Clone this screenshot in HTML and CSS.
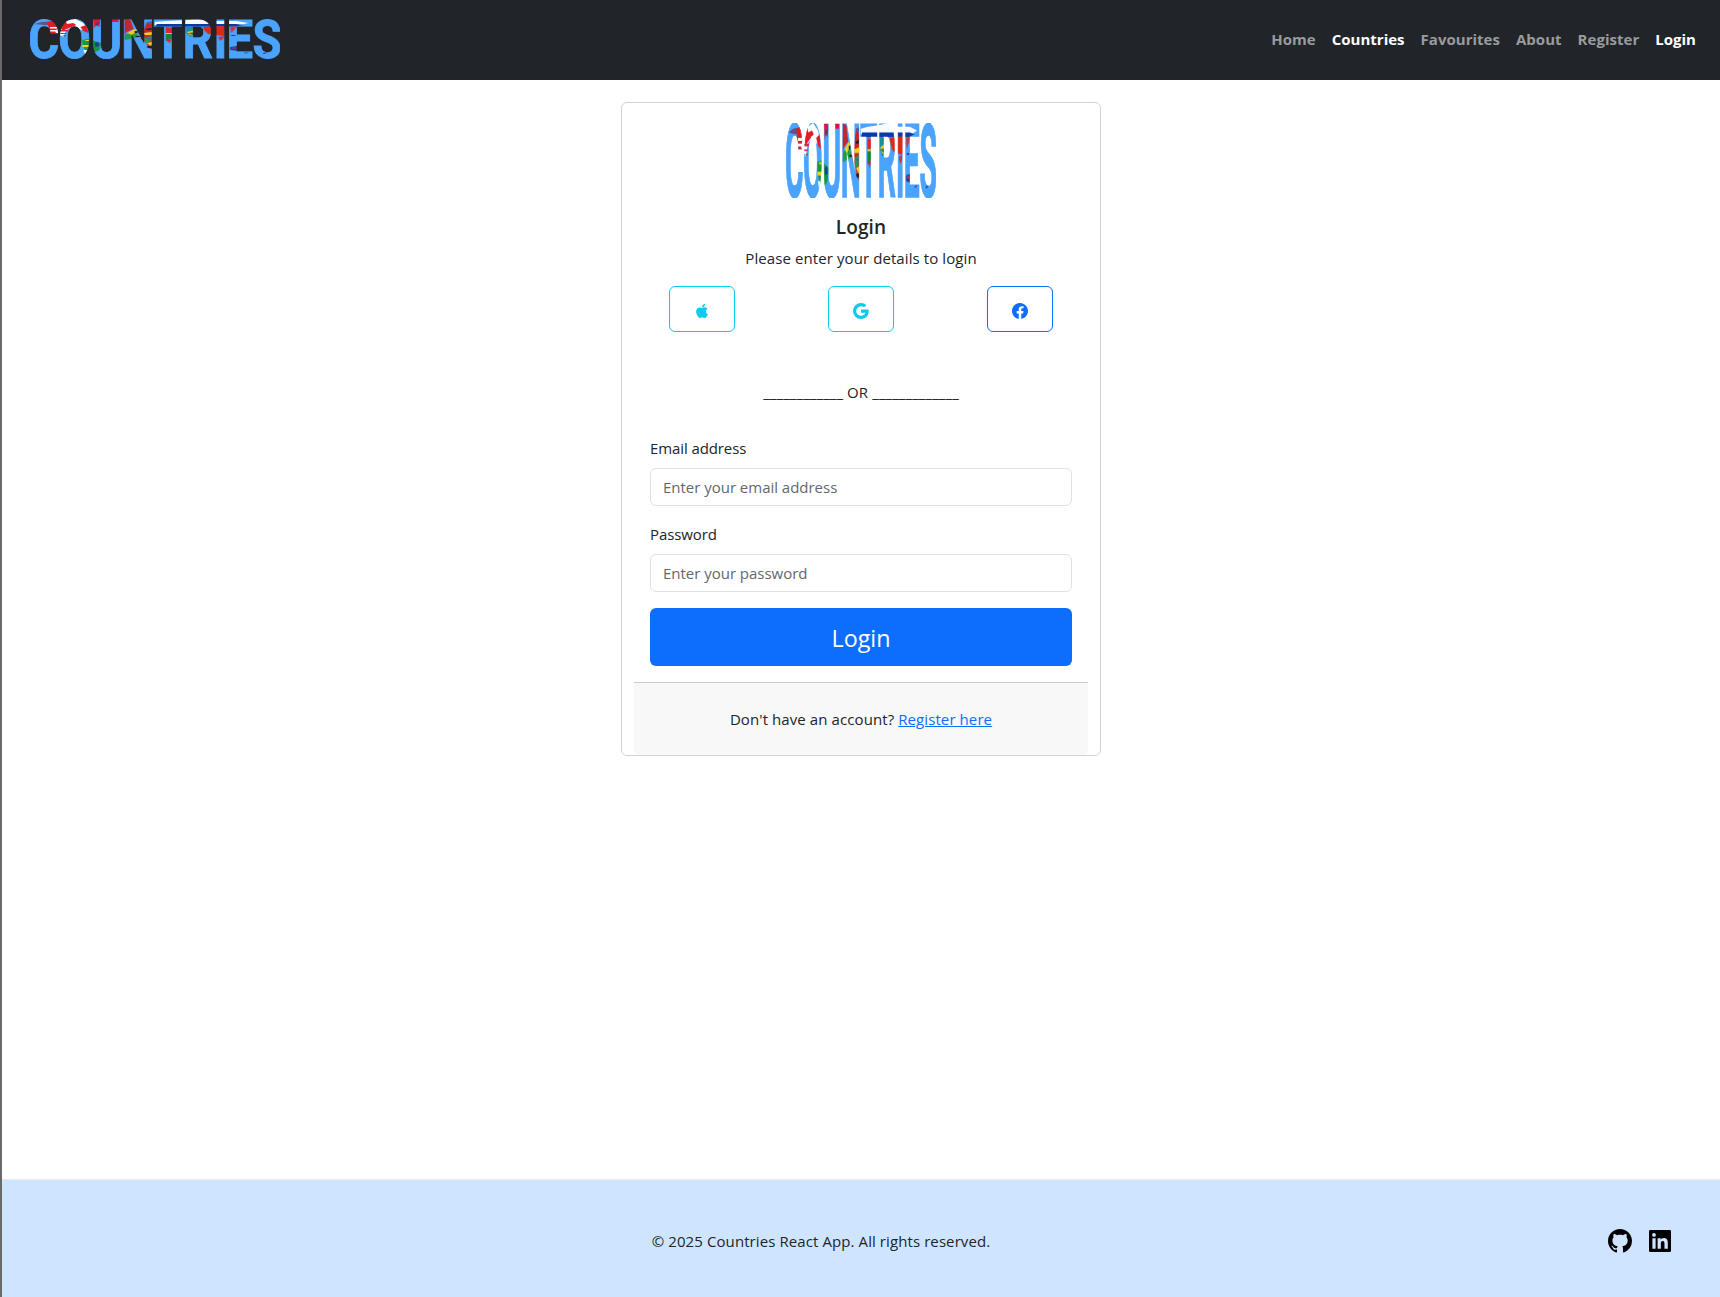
FILE: index.html
```html
<!DOCTYPE html>
<html lang="en">
<head>
<meta charset="utf-8">
<title>Countries</title>
<link rel="stylesheet" href="styles.css">
</head>
<body>
<svg class="defs" aria-hidden="true">
  <defs>
    <pattern id="map" width="260" height="44" patternUnits="userSpaceOnUse" patternTransform="scale(1.1494 1)">
      <rect width="260" height="44" fill="#4aa3ff"/>
      <path d="M4 5l8-2 14-1 1 4H14z" fill="#5b5488"/>
      <path d="M17 3l7-1 3 5v7h-7z" fill="#e01b2c"/>
      <path d="M20 8h7v1.500h-7zM20 11h7v1.500h-7z" fill="#fff"/>
      <path d="M25 13l6-10 14-3 8 4 4 6-6 1-7-4-8 4-3 7z" fill="#fff"/>
      <path d="M31 9l4-7 2 3 6-1 3 2-7 3-7 3zM50 8l6-2 2 8-5-2z" fill="#e51b24"/>
      <path d="M30 11h8v1.500h-8zM30 14h6v1h-6zM31 17l5-1v1.500z" fill="#d9253f"/>
      <path d="M52 21l6-1 13 4-2 7-8 4-5-2-4-7z" fill="#159a3b"/>
      <path d="M52 26h7v2h-7zM55 21h4v1h-4z" fill="#f4d417"/>
      <path d="M64 24l4-1 1 4-4 1z" fill="#173f9b"/>
      <path d="M53 31h4l-2 5z" fill="#fff"/>
      <path d="M63 0h7l-1 8-3-2-2 3zM81 0h7v3h-7z" fill="#dd153d"/>
      <path d="M65 5l4-2v1l-3 3z" fill="#254388"/>
      <path d="M94 0l6 1 3 9-7 3-2 3zM116 3h6v28l-4-2-3-6-5-3z" fill="#c3272d"/>
      <path d="M94 16l10-5 5 7-9 2-6 1zM113 19l8-2-1 6-5 1z" fill="#239b42"/>
      <path d="M97 14l7-4 3 2-6 4zM113 14l8-1v3h-7zM116 24l6-1-2 4z" fill="#f2cd22"/>
      <path d="M104 12h3v2h-3zM115 10l6-1v2h-5zM116 27h6v2h-5zM105 17h5v1h-5z" fill="#182425"/>
      <path d="M116 3l6-1v3h-5zM116 19h6v1h-6z" fill="#3d66a8"/>
      <path d="M124 3l12-1 20-1 11-1 14 2 6 0 18 0 12 2-8 2h-85z" fill="#f8fbff"/>
      <path d="M126 5h79l8 1-9 1.500h-79z" fill="#0b3aa5"/>
      <path d="M135 8l7 1-1 5h-6zM135 21l6-1-2 4z" fill="#dd2430"/>
      <path d="M135 15h6l1 4-7 3z" fill="#16843c"/>
      <path d="M135 14h7v1h-7z" fill="#f0ca25"/>
      <path d="M155 8h9l1 7-5 3-5-4z" fill="#168f9c"/>
      <path d="M156 13l8-2 4 3-4 3-5-1z" fill="#f1c531"/>
      <path d="M157 14l10-1-3 4z" fill="#16823d"/>
      <path d="M172 8l22-1-1 10-9-1-7-1-4-4z" fill="#dc2815"/>
      <path d="M187 18l6-1-1 3-3 2zM199 8l7-1-3 4-3 3z" fill="#c63543"/>
      <path d="M199 28l7-1 3 3-2 2-8-1z" fill="#243aa0"/>
      <path d="M200 29l4-1v2z" fill="#e12c43"/>
      <path d="M205 27l2-1v3h-2zM200 16h4v1h-4zM212 34l6-1-3 1.500zM231 34l6-1-4 2z" fill="#213983"/>
    </pattern>
    <symbol id="logo" viewBox="0 0 250 40" preserveAspectRatio="none">
      <text class="logo-text" transform="scale(.875 1)" y="39.200" x="-1.900 32.300 69.700 104.200 141 174.700 209.700 224.500 254.300">COUNTRIES</text>
    </symbol>
  </defs>
</svg>
<div class="page">
  <header class="navbar">
    <svg class="brand" role="img" aria-label="Countries"><use href="#logo" width="250" height="40"/></svg>
    <nav class="links">
      <a>Home</a><a class="on">Countries</a><a>Favourites</a><a>About</a><a>Register</a><a class="on">Login</a>
    </nav>
  </header>
  <main>
    <section class="card">
      <svg class="card-logo" role="img" aria-label="Countries"><use href="#logo" width="150" height="75"/></svg>
      <h1>Login</h1>
      <p class="intro">Please enter your details to login</p>
      <div class="social">
        <button class="info" aria-label="Apple"><svg width="14" height="16" viewBox="0 0 384 512"><path d="M318.700 268.700c-.2-36.700 16.400-64.400 50-84.800-18.800-26.900-47.200-41.700-84.700-44.600-35.500-2.800-74.300 20.700-88.500 20.700-15 0-49.400-19.700-76.400-19.700C63.300 141.200 4 184.800 4 273.500q0 39.300 14.400 81.200c12.800 36.700 59 126.700 107.200 125.200 25.200-.6 43-17.900 75.800-17.900 31.800 0 48.300 17.900 76.400 17.900 48.600-.7 90.400-82.500 102.600-119.300-65.200-30.700-61.700-90-61.700-91.900zm-56.600-164.200c27.300-32.400 24.800-61.900 24-72.500-24.100 1.400-52 16.400-67.900 34.900-17.500 19.800-27.800 44.300-25.600 71.900 26.100 2 49.900-11.400 69.500-34.300z"/></svg></button>
        <button class="info" aria-label="Google"><svg width="16" height="16" viewBox="0 0 16 16"><path d="M15.545 6.558a9.420 9.420 0 0 1 .139 1.626c0 2.434-.87 4.492-2.384 5.885h.002C11.978 15.292 10.158 16 8 16A8 8 0 1 1 8 0a7.689 7.689 0 0 1 5.352 2.082l-2.284 2.284A4.347 4.347 0 0 0 8 3.166c-2.087 0-3.860 1.408-4.492 3.304a4.792 4.792 0 0 0 0 3.063h.003c.635 1.893 2.405 3.301 4.492 3.301 1.078 0 2.004-.276 2.722-.764h-.003a3.702 3.702 0 0 0 1.599-2.431H8v-3.080h7.545z"/></svg></button>
        <button class="primary" aria-label="Facebook"><svg width="16" height="16" viewBox="0 0 16 16"><path d="M16 8.049c0-4.446-3.582-8.050-8-8.050C3.580 0-.002 3.603-.002 8.050c0 4.017 2.926 7.347 6.750 7.951v-5.625h-2.030V8.050H6.750V6.275c0-2.017 1.195-3.131 3.022-3.131.876 0 1.791.157 1.791.157v1.980h-1.009c-.993 0-1.303.621-1.303 1.258v1.510h2.218l-.354 2.326H9.250V16c3.824-.604 6.750-3.934 6.750-7.951"/></svg></button>
      </div>
      <p class="or"><span>____________</span> OR <span>_____________</span></p>
      <form>
        <label for="email">Email address</label>
        <input id="email" type="email" placeholder="Enter your email address">
        <label for="password">Password</label>
        <input id="password" type="password" placeholder="Enter your password">
        <button class="submit" type="button">Login</button>
      </form>
      <div class="card-footer">Don't have an account? <a>Register here</a></div>
    </section>
  </main>
  <footer>
    <p>© 2025 Countries React App. All rights reserved.</p>
    <div class="profiles">
      <svg width="24" height="24" viewBox="0 0 16 16"><path d="M8 0C3.580 0 0 3.580 0 8c0 3.540 2.290 6.530 5.470 7.590.4.070.55-.17.55-.38 0-.19-.01-.82-.01-1.490-2.010.37-2.530-.49-2.690-.94-.09-.23-.48-.94-.82-1.130-.28-.15-.68-.52-.01-.53.63-.01 1.080.58 1.230.82.72 1.210 1.870.87 2.330.66.07-.52.28-.87.51-1.070-1.780-.2-3.640-.89-3.640-3.950 0-.87.31-1.590.82-2.150-.08-.2-.36-1.020.08-2.120 0 0 .67-.21 2.200.82.64-.18 1.320-.27 2-.27s1.360.09 2 .27c1.530-1.040 2.200-.82 2.200-.82.44 1.100.16 1.920.08 2.120.51.56.82 1.270.82 2.150 0 3.070-1.870 3.750-3.650 3.950.29.25.54.73.54 1.480 0 1.070-.01 1.930-.01 2.200 0 .21.15.46.55.38A8.010 8.010 0 0 0 16 8c0-4.420-3.580-8-8-8"/></svg>
      <svg width="22" height="22" viewBox="0 0 24 24"><path fill-rule="evenodd" d="M1.500 0h21A1.500 1.500 0 0 1 24 1.500v21a1.500 1.500 0 0 1-1.500 1.500h-21A1.500 1.500 0 0 1 0 22.500v-21A1.500 1.500 0 0 1 1.500 0zM3.700 9v11.500h3.500V9zM5.450 3.300a2.050 2.050 0 1 0 0 4.100 2.050 2.050 0 0 0 0-4.100zM9.400 9v11.500h3.500v-5.700c0-1.600.5-2.900 2.100-2.900s1.900 1.400 1.900 3v5.600h3.600v-6.300c0-3.100-.8-5.500-4.400-5.500-1.700 0-2.800.9-3.300 1.800V9z"/></svg>
    </div>
  </footer>
</div>
</body>
</html>
```
FILE: styles.css
```css
* { box-sizing: border-box; }
body {
  margin: 0;
  font: 15px/24px "Open Sans", "Noto Sans", sans-serif;
  letter-spacing: .09px;
  color: #212529;
  background: #fff;
}
h1, p { margin: 0; }
.defs { position: absolute; width: 0; height: 0; }
.logo-text {
  font-family: Roboto, sans-serif;
  font-weight: 700;
  font-size: 54px;
  letter-spacing: 0;
  fill: url(#map);
  stroke: url(#map);
  stroke-width: .9px;
}
.page {
  display: flex;
  flex-direction: column;
  height: 1297px;
  border-left: 2px solid #6a6a6a;
}
.navbar {
  display: flex;
  align-items: center;
  justify-content: space-between;
  height: 80px;
  padding: 0 24px 2px 28px;
  background: #212529;
}
.brand { width: 250px; height: 40px; }
.links { display: flex; gap: 16px; font-weight: 700; letter-spacing: .02px; }
.links a { color: #999b9d; white-space: nowrap; }
.links a.on { color: #fff; }
main { flex: 1; padding-top: 22px; }
.card {
  display: flex;
  flex-direction: column;
  width: 480px;
  height: 654px;
  margin: 0 auto;
  padding: 20px 12px 0;
  border: 1px solid #d3d3d4;
  border-radius: 6px;
}
.card-logo { width: 150px; height: 75px; margin: 0 auto; flex: none; }
h1 { margin-top: 17px; font-size: 19px; font-weight: 600; line-height: 24px; text-align: center; }
.intro { margin-top: 7px; text-align: center; }
.social { display: flex; justify-content: space-between; margin: 16px 35px 0; }
.social button {
  display: flex;
  align-items: center;
  justify-content: center;
  width: 66px;
  height: 46px;
  padding: 3px 0 0;
  background: none;
  border: 1px solid currentColor;
  border-radius: 6px;
}
.social svg { fill: currentColor; }
.info { color: #0dcaf0; }
.primary { color: #0d6efd; }
.or { margin-top: 48px; text-align: center; white-space: nowrap; }
form { display: flex; flex-direction: column; margin: 32px 16px 0; letter-spacing: -.1px; }
input {
  height: 38px;
  margin: 8px 0 16px;
  padding: 0 12px;
  font: inherit;
  letter-spacing: -.02px;
  border: 1px solid #dee2e6;
  border-radius: 6px;
}
input::placeholder { color: #63686d; opacity: 1; }
.submit {
  height: 58px;
  padding: 2px 0 0;
  font: 23.300px/34px "Open Sans", sans-serif;
  color: #fff;
  background: #0d6efd;
  border: 0;
  border-radius: 6px;
}
.card-footer {
  height: 73px;
  margin-top: 16px;
  padding-top: 24px;
  text-align: center;
  background: #f8f8f8;
  border-top: 1px solid #cbcbcc;
  border-radius: 0 0 5px 5px;
}
.card-footer a { color: #0d6efd; text-decoration: underline; }
footer {
  display: flex;
  align-items: center;
  height: 118px;
  padding: 5px 49px 0 0;
  background: #cfe5ff;
  border-top: 1px solid #e6ecf0;
}
footer p { flex: 1; padding-left: 32px; text-align: center; }
.profiles { display: flex; align-items: center; gap: 17px; }
```
